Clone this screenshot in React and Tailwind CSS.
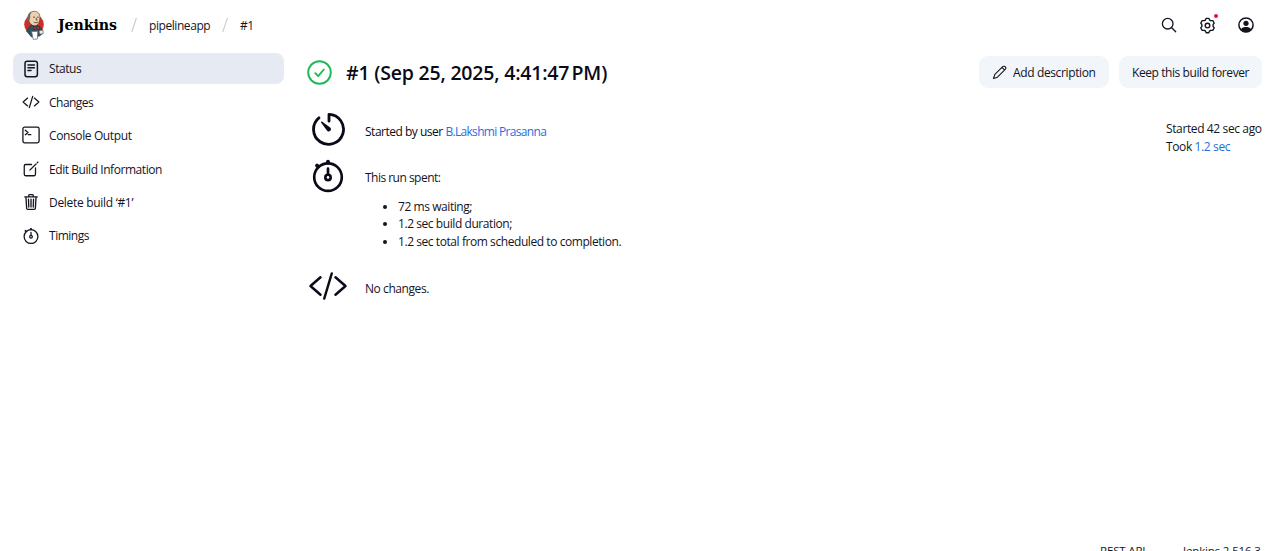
import React from 'react';

function Svg({ className, box = '0 0 512 512', sw = 32, children }) {
  return (
    <svg className={'block shrink-0 ' + className} viewBox={box} fill="none" stroke="currentColor" strokeWidth={sw} strokeLinecap="round" strokeLinejoin="round">
      {children}
    </svg>
  );
}

const StatusIcon = () => (
  <Svg className="w-[18px] h-[18px]" box="0 0 18 18" sw={1.5}>
    <rect x="3" y="1.2" width="12.4" height="15.6" rx="2.2" />
    <path d="M6 5h6.400M6 7.800h6.400M6 10.600h3" />
  </Svg>
);
const CodeIcon = ({ className, sw }) => (
  <Svg className={className} sw={sw}>
    <path d="M160 368L32 256l128-112M352 368l128-112-128-112M304 96l-96 320" />
  </Svg>
);
const ConsoleIcon = () => (
  <Svg className="w-[18px] h-[18px]" box="0 0 18 18" sw={1.3}>
    <rect x="0.9" y="1.2" width="16.2" height="15.6" rx="1.800" />
    <path d="M3.3 4.2l2.7 2.3-2.7 2.2M6.2 8.7h2.6" />
  </Svg>
);
const EditIcon = () => (
  <Svg className="w-[18px] h-[18px]" sw={36}>
    <path d="M384 224v184a40 40 0 01-40 40H104a40 40 0 01-40-40V168a40 40 0 0140-40h167.48" />
    <path d="M459.94 53.25a16.06 16.06 0 00-23.22-.56L424.35 65a8 8 0 000 11.31l11.34 11.32a8 8 0 0011.34 0l12.06-12c6.1-6.09 6.67-16.01.85-22.38zM399.34 90L218.82 270.2l-10 31.8 32.18-9L421.3 112.66z" fill="currentColor" strokeWidth="6" />
  </Svg>
);
const TrashIcon = () => (
  <Svg className="w-[18px] h-[18px]" sw={38}>
    <path d="M112 112l20 320c.95 18.49 14.4 32 32 32h184c17.67 0 30.87-13.51 32-32l20-320M80 112h352M192 112V72a24 24 0 0124-24h80a24 24 0 0124 24v40M256 176v224M184 176l8 224M328 176l-8 224" />
  </Svg>
);
const StopwatchIcon = ({ className, sw }) => (
  <Svg className={className} sw={sw}>
    <circle cx="256" cy="272" r="196" />
    <path d="M256 232V150M256 72V52" />
    <path d="M256 52v10M100 108l16 16" strokeWidth="54" />
    <circle cx="256" cy="276" r="38" />
  </Svg>
);
const TimerIcon = () => (
  <Svg className="ml-[3px] mr-px mt-[2px] h-9 w-9" sw={40}>
    <path d="M112.9 97.2a213 213 0 10143.100-49.200v96" />
    <path d="M232 284L145 168c-8-11 5-24 16-16l116 87a32 32 0 01-45 45z" fill="currentColor" stroke="none" />
  </Svg>
);
const PencilIcon = () => (
  <Svg className="w-[15px] h-[15px]" sw={36}>
    <path d="M364 58L98 324 48 462l138-48L452 148c25-25 25-62 4-86s-67-29-92-4zM340 84l86 86" />
  </Svg>
);
const GearIcon = () => (
  <Svg className="w-[17px] h-[17px]" box="0 0 17 17" sw={1.35}>
    <path d="M7.200 1.300h2.600l.9 1.800 1.100.6 2-.1 1.400 2.400-1.100 1.600v1.800l1.100 1.600-1.400 2.400-2-.1-1.100.6-.9 1.800H7.200l-.9-1.800-1.100-.6-2 .1L1.800 11l1.100-1.600V7.600L1.800 6l1.400-2.400 2 .1 1.100-.6z" />
    <circle cx="8.500" cy="8.500" r="2.300" />
  </Svg>
);
const UserIcon = () => (
  <Svg className="w-4 h-4" box="0 0 16 16" sw={1.5}>
    <circle cx="8" cy="8" r="7.1" />
    <circle cx="8" cy="6.3" r="2.600" fill="currentColor" stroke="none" />
    <path d="M2.600 12.600C4 10.200 6 9.900 8 9.900s4 .3 5.400 2.700C12 14.400 10 15.200 8 15.200s-4-.8-5.400-2.600z" fill="currentColor" stroke="none" />
  </Svg>
);
const Butler = () => (
  <svg className="block w-[22px] h-[30px] shrink-0" viewBox="0 0 22 30">
    <circle cx="11" cy="14.500" r="9.800" fill="#c9302c" />
    <path d="M3.400 21L8 15l7.500 1 3.500 3 .5 4.500-3 2.500-8 1z" fill="#335061" stroke="#1d2b36" strokeWidth=".6" />
    <path d="M5.400 7.600C5.600 3.600 8 1.300 11.300 1.300c3.700 0 5.700 2.500 5.600 6.400-.1 4.200-1.700 7.900-5 8.100-3.600.100-6.700-3.600-6.500-8.200z" fill="#edd0ae" stroke="#3a3029" strokeWidth=".6" />
    <path d="M4.600 10.500c-1-4.100.8-7.600 4-8.900C7.300 3.200 7 5 7.200 7.700l-1.100 3.600z" fill="#6f675d" />
    <path d="M10 7.200h2M14 7.200h1.700M10.800 12.200c1.500.9 3 .6 4.200-.3M13.300 7.800v2.300h1.300" stroke="#4b3a30" strokeWidth=".8" fill="none" />
    <path d="M10.800 16.300l2.500 1.200 3-1.500.100 3.500-3-1-2.500 1.200z" fill="#d33833" stroke="#1d1d1d" strokeWidth=".5" />
    <path d="M8.600 21.600l6.200-.3-.4 7.700-4.200.4z" fill="#fff" stroke="#5b6270" strokeWidth=".7" />
    <path d="M16 20.500l4-.4.2 3.700-3.700.4z" fill="#ece8e2" stroke="#333" strokeWidth=".5" />
  </svg>
);

const Slash = () => (
  <svg className="block w-[6px] h-4 shrink-0" viewBox="0 0 6 16"><path d="M5.400 1L.8 15" stroke="#c9d0da" strokeWidth="1.200" /></svg>
);

const items = [
  { icon: <StatusIcon />, label: 'Status', active: true, track: 'tracking-[-0.45px]' },
  { icon: <CodeIcon className="w-[18px] h-[18px]" sw={36} />, label: 'Changes', track: 'tracking-[-0.52px]' },
  { icon: <ConsoleIcon />, label: 'Console Output', track: 'tracking-[-0.38px]' },
  { icon: <EditIcon />, label: 'Edit Build Information', track: 'tracking-[-0.44px]' },
  { icon: <TrashIcon />, label: 'Delete build ‘#1’', track: 'tracking-[-0.3px]' },
  { icon: <StopwatchIcon className="w-[18px] h-[18px]" sw={36} />, label: 'Timings', track: 'tracking-[-0.48px]' },
];

export default function App() {
  return (
    <div className="h-[551px] w-[1280px] overflow-hidden bg-white text-[#14141f] text-[12px] leading-[17.600px] tracking-[-0.43px] font-['Open_Sans','Noto_Sans',sans-serif]">
      <div className="flex h-[561px] flex-col">
        <header className="flex h-[50px] shrink-0 items-center pl-[23px] pr-[26px]">
          <Butler />
          <span className="ml-[13px] w-[61px] whitespace-nowrap text-[14.200px] font-bold leading-5 tracking-[-0.1px] text-black font-['DejaVu_Serif',serif]">Jenkins</span>
          <span className="ml-[12px]"><Slash /></span>
          <span className="ml-[12px] w-[61px] whitespace-nowrap pt-px">pipelineapp</span>
          <span className="ml-[12px]"><Slash /></span>
          <span className="ml-[12px] pt-px tracking-[-0.6px]">#1</span>
          <div className="ml-auto flex items-center">
            <Svg className="w-4 h-4" box="0 0 16 16" sw={1.3}><circle cx="6.700" cy="6.700" r="5.300" /><path d="M10.700 10.700l4 4" /></Svg>
            <div className="relative ml-[22px]">
              <GearIcon />
              <span className="absolute -right-[2px] -top-[3px] h-1 w-1 rounded-full bg-[#e6112d]" />
            </div>
            <span className="ml-[22px]"><UserIcon /></span>
          </div>
        </header>
        <div className="flex pt-[3px]">
          <nav className="ml-[13px] flex w-[271px] shrink-0 flex-col gap-[2px]">
            {items.map((it) => (
              <a key={it.label} className={'flex h-[31.400px] items-center gap-[9px] rounded-[8px] pl-[9px] ' + it.track + (it.active ? ' bg-[#e6ebf3]' : '')}>
                {it.icon}
                <span className="pt-px">{it.label}</span>
              </a>
            ))}
          </nav>
          <main className="ml-[23px] mr-[18px] flex-1">
            <div className="flex h-[38px] items-center">
              <Svg className="w-[25px] h-[25px] text-[#1fb956]" box="0 0 25 25" sw={1.900}><circle cx="12.500" cy="12.500" r="11.300" /><path d="M8.300 13.200l2.900 2.900 5.600-6.600" /></Svg>
              <h1 className="ml-[14px] whitespace-nowrap pt-px text-[19.500px] font-semibold leading-6 tracking-[-0.2px] text-[#0a0a18]">#1 (Sep 25, 2025, 4:41:47{'\u202f'}PM)</h1>
              <div className="ml-auto flex gap-[10px]">
                <button className="flex h-8 w-[130px] items-center gap-[6px] whitespace-nowrap rounded-[9px] bg-[#f2f5f9] pl-[13px] tracking-[-0.37px]"><PencilIcon /><span className="pt-px">Add description</span></button>
                <button className="h-8 w-[143px] whitespace-nowrap rounded-[9px] bg-[#f2f5f9] pt-px tracking-[-0.41px]">Keep this build forever</button>
              </div>
            </div>
            <div className="flex pt-[18px]">
              <div className="flex-1 pl-px">
                <div className="flex h-[48px] text-[#0a0a18]">
                  <TimerIcon />
                  <p className="ml-[17px] pt-[14px] tracking-[-0.49px]">Started by user <a className="tracking-[-0.68px] text-[#1f6fe0]">B.Lakshmi Prasanna</a></p>
                </div>
                <div className="flex h-[109px]">
                  <StopwatchIcon className="mx-[2px] mt-px h-9 w-9 text-[#0a0a18]" sw={38} />
                  <div className="ml-[17px] pt-[12px]">
                    <p className="tracking-[-0.52px]">This run spent:</p>
                    <ul className="mt-[11px] list-disc pl-[33px]">
                      <li>72 ms waiting;</li>
                      <li>1.2 sec build duration;</li>
                      <li>1.2 sec total from scheduled to completion.</li>
                    </ul>
                  </div>
                </div>
                <div className="flex">
                  <CodeIcon className="h-10 w-10 text-[#0a0a18]" sw={32} />
                  <p className="ml-[17px] pt-[14px]">No changes.</p>
                </div>
              </div>
              <div className="w-[96px] whitespace-nowrap pt-[11px] tracking-[-0.38px]">
                <p>Started 42 sec ago</p>
                <p>Took <a className="text-[#1f6fe0]">1.2 sec</a></p>
              </div>
            </div>
          </main>
        </div>
        <footer className="mt-auto flex justify-end whitespace-nowrap pr-[20px] text-[11.500px] leading-5 tracking-[-0.15px]">
          <span className="w-[83px]">REST API</span>
          <span className="w-[77px]">Jenkins 2.516.3</span>
        </footer>
      </div>
    </div>
  );
}
